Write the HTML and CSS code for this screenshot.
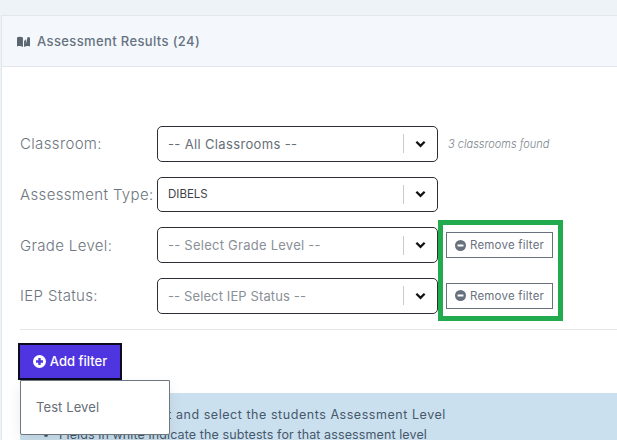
FILE: index.html
```html
<!DOCTYPE html>
<html lang="en">
<head>
<meta charset="utf-8">
<title>Assessment Results</title>
<link rel="stylesheet" href="styles.css">
</head>
<body>
<section class="card">
  <header class="card-head">
    <svg class="book" viewBox="0 0 12 10" aria-hidden="true"><path d="M0 1.2 C1.6.4 3.6.4 5.5 1.4V10C3.8 9 1.8 9 0 9.6Z"/><path d="M6.5 4.5 8.2 3V7.4L9.8 0.8H10.6V1L12 1.2V9.6C10.2 9 8.2 9 6.5 10Z"/></svg>
    <h2 class="card-title">Assessment Results (24)</h2>
  </header>
  <div class="card-body">
    <div class="filter-row">
      <label class="filter-label">Classroom:</label>
      <div class="select"><span class="select-text muted">-- All Classrooms --</span><span class="select-sep"></span><svg class="chev" viewBox="0 0 12 8"><path d="M1.5 1.5 6 6l4.5-4.5"/></svg></div>
      <span class="hint">3 classrooms found</span>
    </div>
    <div class="filter-row">
      <label class="filter-label">Assessment Type:</label>
      <div class="select"><span class="select-text value">DIBELS</span><span class="select-sep"></span><svg class="chev" viewBox="0 0 12 8"><path d="M1.5 1.5 6 6l4.5-4.5"/></svg></div>
    </div>
    <div class="filter-row">
      <label class="filter-label">Grade Level:</label>
      <div class="select"><span class="select-text faint">-- Select Grade Level --</span><span class="select-sep"></span><svg class="chev" viewBox="0 0 12 8"><path d="M1.5 1.5 6 6l4.5-4.5"/></svg></div>
      <button class="remove"><svg class="remove-icon" viewBox="0 0 12 12"><circle cx="6" cy="6" r="6"/><rect x="2.8" y="4.9" width="6.4" height="2.2" fill="#fff"/></svg>Remove filter</button>
    </div>
    <div class="filter-row">
      <label class="filter-label">IEP Status:</label>
      <div class="select"><span class="select-text faint tight">-- Select IEP Status --</span><span class="select-sep"></span><svg class="chev" viewBox="0 0 12 8"><path d="M1.5 1.5 6 6l4.5-4.5"/></svg></div>
      <button class="remove"><svg class="remove-icon" viewBox="0 0 12 12"><circle cx="6" cy="6" r="6"/><rect x="2.8" y="4.9" width="6.4" height="2.2" fill="#fff"/></svg>Remove filter</button>
    </div>
    <div class="highlight"></div>
    <hr class="rule">
    <div class="add-wrap">
      <button class="add"><svg class="add-icon" viewBox="0 0 12 12"><circle cx="6" cy="6" r="6" fill="#fff"/><path d="M6 2.8v6.4M2.8 6h6.4" stroke="#4f35e0" stroke-width="2.2"/></svg>Add filter</button>
      <div class="menu">Test Level</div>
    </div>
    <div class="info">
      <ul class="info-list">
        <li class="info-first">Click the student and select the students Assessment Level</li>
        <li class="info-second">Fields in white indicate the subtests for that assessment level</li>
      </ul>
    </div>
  </div>
</section>
</body>
</html>
```
FILE: styles.css
```css
* { box-sizing: border-box; }
html, body { height: 100%; }
body {
  margin: 0;
  height: 440px;
  overflow: hidden;
  padding-top: 15px;
  background: #eef3f7;
  font-family: "Inter", "Open Sans", sans-serif;
  color: #6b7280;
}
.card {
  margin-left: 1px;
  height: 425px;
  background: #fff;
  border-top: 1px solid #e3e7eb;
  border-left: 1px solid #e3e7eb;
  overflow: hidden;
}
.card-head {
  height: 51px;
  background: #f4f7fb;
  border-bottom: 1px solid #e2e5e9;
  display: flex;
  align-items: center;
  padding-left: 15px;
  gap: 7px;
}
.book { width: 13px; height: 11px; fill: #5b6670; }
.card-title {
  margin: 0;
  font-size: 13px;
  font-weight: 500;
  color: #667280;
  letter-spacing: .37px;
}
.card-body { position: relative; padding: 59px 0 0 18px; }
.filter-row {
  display: flex;
  align-items: center;
  height: 35.6px;
  margin-bottom: 15.1px;
}
.filter-label {
  width: 137px;
  flex: none;
  font-size: 15px;
  font-weight: 300;
  letter-spacing: .35px;
  color: #6d7680;
  white-space: nowrap;
}
.select {
  width: 281px;
  height: 100%;
  flex: none;
  display: flex;
  align-items: center;
  border: 1px solid #2b2f33;
  border-radius: 5px;
  padding-left: 10px;
  background: #fff;
}
.select-text { flex: 1; font-size: 13px; letter-spacing: .35px; white-space: nowrap; }
.muted { color: #666e76; }
.value { color: #3c4248; font-size: 11.5px; letter-spacing: 0; }
.faint { color: #8a9097; letter-spacing: .25px; }
.tight { letter-spacing: .12px; }
.select-sep { width: 1px; height: 19px; background: #c8cbce; }
.chev {
  width: 11px;
  height: 8px;
  margin: 0 11px 0 11px;
  fill: none;
  stroke: #111;
  stroke-width: 2.5;
}
.hint {
  margin-left: 10px;
  font-size: 11px;
  font-style: italic;
  font-weight: 300;
  color: #7d858d;
  white-space: nowrap;
}
.remove {
  width: 107px;
  height: 26px;
  margin-left: 8px;
  display: flex;
  align-items: center;
  gap: 4px;
  padding: 0 0 0 8px;
  background: #fff;
  border: 1px solid #67727e;
  font: 400 11.5px "Inter", sans-serif;
  letter-spacing: .2px;
  color: #6b7280;
  white-space: nowrap;
}
.remove-icon { width: 11px; height: 11px; fill: #67727e; flex: none; }
.highlight {
  position: absolute;
  left: 436px;
  top: 153px;
  width: 125px;
  height: 101px;
  border: 5px solid #22aa4f;
}
.rule {
  margin: 0;
  border: 0;
  border-top: 1px solid #e4e6e8;
}
.add-wrap { position: relative; margin: 13px 0 0 -2px; height: 37px; z-index: 2; }
.add {
  width: 104px;
  height: 37px;
  display: flex;
  align-items: center;
  justify-content: center;
  gap: 4px;
  padding: 0;
  background: #4f35e0;
  border: 2px solid #0c0c20;
  color: #fff;
  font: 500 13px "Inter", sans-serif;
}
.add-icon { width: 13px; height: 13px; flex: none; }
.menu {
  position: absolute;
  left: 2px;
  top: 37px;
  width: 150px;
  height: 55px;
  padding: 18px 0 0 15px;
  background: #fff;
  border: 1px solid #6e7680;
  border-radius: 0 0 2px 2px;
  font-size: 13px;
  letter-spacing: .1px;
  color: #666e76;
  box-shadow: 0 6px 14px rgba(0,0,0,.08);
}
.info {
  margin-top: 13px;
  height: 60px;
  background: #cbe0ee;
  padding: 12px 0 0 21px;
}
.info-list {
  margin: 0;
  padding: 0 0 0 18px;
  font-size: 12.5px;
  line-height: 20px;
  color: #46586c;
  white-space: nowrap;
}
.info-first { letter-spacing: .55px; text-indent: 4px; }
.info-second { letter-spacing: .11px; }
```
